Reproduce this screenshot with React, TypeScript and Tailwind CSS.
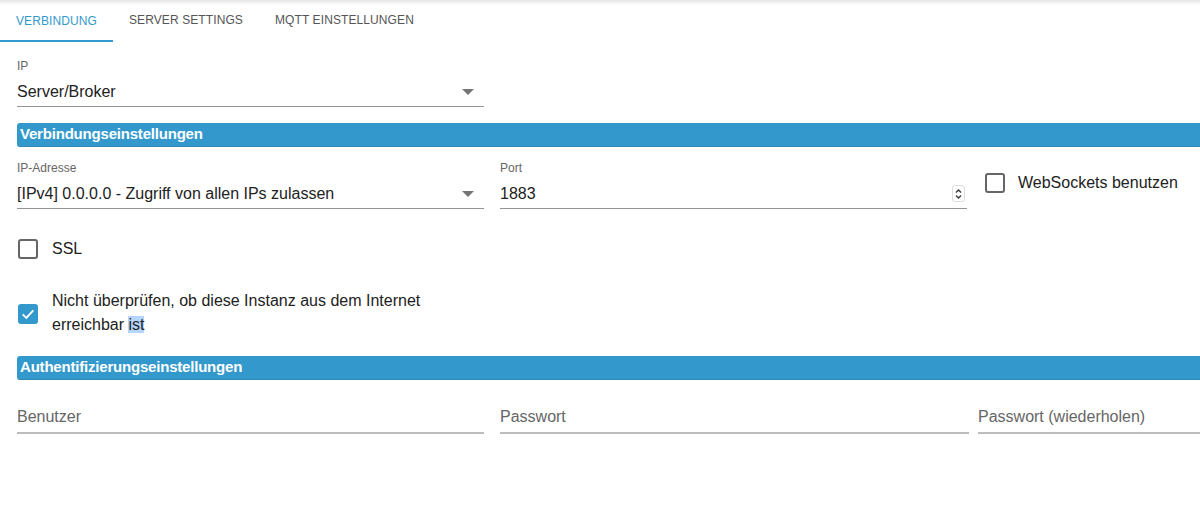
import React from "react"

function Caret() {
  return (
    <svg width="12" height="6" viewBox="0 0 12 6" className="fill-[#757575]">
      <path d="M0 0 L12 0 L6 6 Z" />
    </svg>
  )
}

function SectionHeader({ title }: { title: string }) {
  return (
    <div className="ml-[17px] h-[24px] rounded-l-[3px] bg-[#3399cc] pl-[3px] flex items-center border-b border-[#2f88b6]">
      <span className="text-white font-bold text-[15px] font-['Liberation_Sans',sans-serif] tracking-[-0.2px]">
        {title}
      </span>
    </div>
  )
}

function Checkbox({ checked }: { checked?: boolean }) {
  if (checked) {
    return (
      <div className="w-[20px] h-[20px] rounded-[3px] bg-[#3399cc] flex items-center justify-center shrink-0">
        <svg width="16" height="16" viewBox="0 0 24 24" fill="none" stroke="white" strokeWidth="2.8">
          <path d="M4 12.5 L9.5 18 L20 6.5" />
        </svg>
      </div>
    )
  }
  return <div className="w-[20px] h-[20px] rounded-[3px] border-2 border-[#666] shrink-0" />
}

function Field({ label, value, select, spinner, className }: { label?: string; value: string; select?: boolean; spinner?: boolean; className?: string }) {
  return (
    <div className={className}>
      {label && <div className="text-[12px] text-[#666] leading-[14px] mb-[7px]">{label}</div>}
      <div className="h-[27px] border-b border-[#949494] flex items-center justify-between pb-[3px]">
        <span className="text-[16px] text-[#222]">{value}</span>
        {select && <span className="mr-[10px]"><Caret /></span>}
        {spinner && (
          <span className="w-[13px] h-[17px] mr-[2px] rounded-[3px] border border-[#ddd] flex flex-col items-center justify-center">
            <svg width="7" height="12" viewBox="0 0 7 12" fill="none" stroke="#333" strokeWidth="1.3">
              <path d="M1 4.5 L3.5 2 L6 4.5" />
              <path d="M1 7.5 L3.5 10 L6 7.5" />
            </svg>
          </span>
        )}
      </div>
    </div>
  )
}

function PlaceholderField({ label, className }: { label: string; className?: string }) {
  return (
    <div className={className}>
      <div className="h-[30px] border-b-2 border-[#bdbdbd] flex items-center pb-[3px]">
        <span className="text-[16px] text-[#666]">{label}</span>
      </div>
    </div>
  )
}

export default function App() {
  return (
    <div className="w-[1200px] h-[506px] bg-white overflow-hidden font-['Liberation_Sans',Arial,sans-serif] relative">
      <div className="absolute top-0 left-0 right-0 h-[5px] bg-gradient-to-b from-[#e6e6e6] to-transparent" />
      <nav className="flex h-[42px] items-stretch">
        <div className="px-4 flex items-center text-[12px] tracking-[0.1px] text-[#3399cc] border-b-2 border-[#3399cc] pt-[2px] w-[113px]">VERBINDUNG</div>
        <div className="px-4 flex items-center text-[12px] tracking-[0.1px] text-[#555] pb-[2px]">SERVER SETTINGS</div>
        <div className="px-4 flex items-center text-[12px] tracking-[0.1px] text-[#555] pb-[2px]">MQTT EINSTELLUNGEN</div>
      </nav>

      <div className="pt-[17px]">
        <Field label="IP" value="Server/Broker" select className="ml-[17px] w-[467px]" />
      </div>

      <div className="mt-[16px]">
        <SectionHeader title="Verbindungseinstellungen" />
      </div>

      <div className="flex mt-[14px]">
        <Field label="IP-Adresse" value="[IPv4] 0.0.0.0 - Zugriff von allen IPs zulassen" select className="ml-[17px] w-[467px]" />
        <Field label="Port" value="1883" spinner className="ml-[16px] w-[467px]" />
        <label className="ml-[18px] flex items-start gap-[13px] pt-[12px]">
          <Checkbox />
          <span className="text-[16px] text-[#222] leading-[18px] pt-[1px]">WebSockets benutzen</span>
        </label>
      </div>

      <label className="flex items-center gap-[14px] ml-[18px] mt-[28px]">
        <Checkbox />
        <span className="text-[16px] text-[#222]">SSL</span>
      </label>

      <label className="flex items-center gap-[14px] ml-[18px] mt-[28px]">
        <div className="mt-[2px]"><Checkbox checked /></div>
        <span className="text-[16px] text-[#222] leading-[24px]">
          Nicht überprüfen, ob diese Instanz aus dem Internet
          <br />
          erreichbar <span className="bg-[#b4d5fe]">ist</span>
        </span>
      </label>

      <div className="mt-[19px]">
        <SectionHeader title="Authentifizierungseinstellungen" />
      </div>

      <div className="flex mt-[24px]">
        <PlaceholderField label="Benutzer" className="ml-[17px] w-[467px]" />
        <PlaceholderField label="Passwort" className="ml-[16px] w-[469px]" />
        <PlaceholderField label="Passwort (wiederholen)" className="ml-[9px] flex-1" />
      </div>
    </div>
  )
}
